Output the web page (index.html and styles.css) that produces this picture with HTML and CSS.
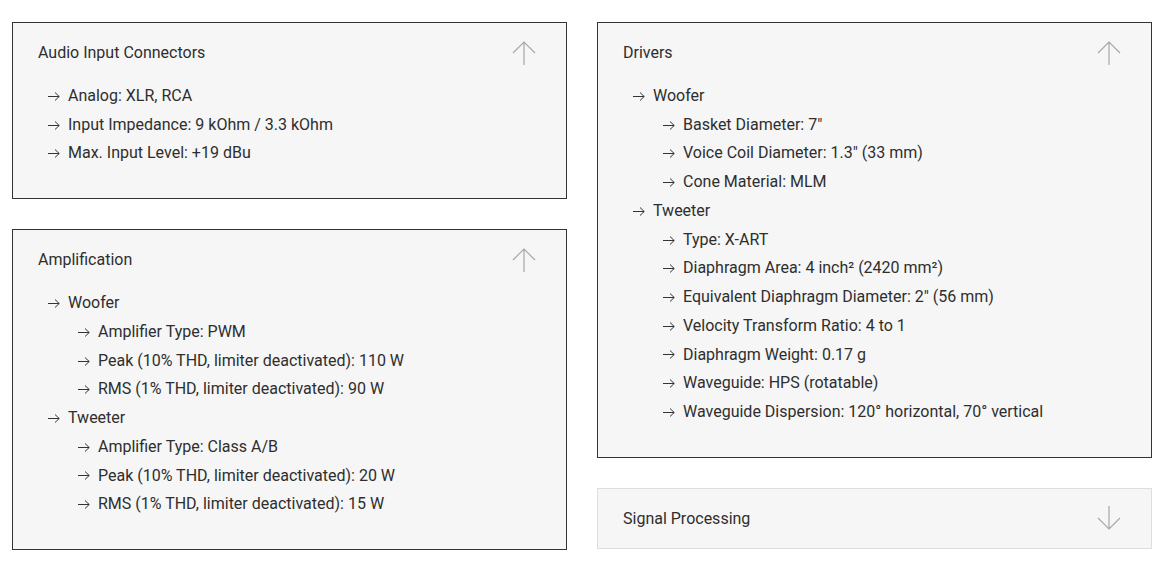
FILE: index.html
```html
<!DOCTYPE html>
<html lang="en">
<head>
  <meta charset="UTF-8" />
  <meta name="viewport" content="width=device-width, initial-scale=1" />
  <title>Technical Specifications</title>
  <link rel="stylesheet" href="styles.css">
</head>
<body>

  <div class="specs">
    <div class="column">

      <section class="spec-card open">
        <div class="spec-head">
          <span>Audio Input Connectors</span>
          <svg class="toggle" viewBox="0 0 24 24"><path d="M12 1v23M1 12L12 1l11 11"/></svg>
        </div>
        <ul class="spec-list">
          <li><i class="arr"></i>Analog: XLR, RCA</li>
          <li><i class="arr"></i>Input Impedance: 9 kOhm / 3.3 kOhm</li>
          <li><i class="arr"></i>Max. Input Level: +19 dBu</li>
        </ul>
      </section>

      <section class="spec-card open">
        <div class="spec-head">
          <span>Amplification</span>
          <svg class="toggle" viewBox="0 0 24 24"><path d="M12 1v23M1 12L12 1l11 11"/></svg>
        </div>
        <ul class="spec-list">
          <li><i class="arr"></i>Woofer</li>
          <li class="sub"><i class="arr"></i>Amplifier Type: PWM</li>
          <li class="sub"><i class="arr"></i>Peak (10% THD, limiter deactivated): 110 W</li>
          <li class="sub"><i class="arr"></i>RMS (1% THD, limiter deactivated): 90 W</li>
          <li><i class="arr"></i>Tweeter</li>
          <li class="sub"><i class="arr"></i>Amplifier Type: Class A/B</li>
          <li class="sub"><i class="arr"></i>Peak (10% THD, limiter deactivated): 20 W</li>
          <li class="sub"><i class="arr"></i>RMS (1% THD, limiter deactivated): 15 W</li>
        </ul>
      </section>

    </div>
    <div class="column">

      <section class="spec-card open">
        <div class="spec-head">
          <span>Drivers</span>
          <svg class="toggle" viewBox="0 0 24 24"><path d="M12 1v23M1 12L12 1l11 11"/></svg>
        </div>
        <ul class="spec-list">
          <li><i class="arr"></i>Woofer</li>
          <li class="sub"><i class="arr"></i>Basket Diameter: 7″</li>
          <li class="sub"><i class="arr"></i>Voice Coil Diameter: 1.3″ (33 mm)</li>
          <li class="sub"><i class="arr"></i>Cone Material: MLM</li>
          <li><i class="arr"></i>Tweeter</li>
          <li class="sub"><i class="arr"></i>Type: X-ART</li>
          <li class="sub"><i class="arr"></i>Diaphragm Area: 4 inch² (2420 mm²)</li>
          <li class="sub"><i class="arr"></i>Equivalent Diaphragm Diameter: 2″ (56 mm)</li>
          <li class="sub"><i class="arr"></i>Velocity Transform Ratio: 4 to 1</li>
          <li class="sub"><i class="arr"></i>Diaphragm Weight: 0.17 g</li>
          <li class="sub"><i class="arr"></i>Waveguide: HPS (rotatable)</li>
          <li class="sub"><i class="arr"></i>Waveguide Dispersion: 120° horizontal, 70° vertical</li>
        </ul>
      </section>

      <section class="spec-card">
        <div class="spec-head">
          <span>Signal Processing</span>
          <svg class="toggle" viewBox="0 0 24 24"><path d="M12 0v23M1 12l11 11 11-11"/></svg>
        </div>
      </section>

    </div>
  </div>

</body>
</html>
```

FILE: styles.css
```css
body {
  margin: 0;
  background: #ffffff;
  font-family: Roboto, "Liberation Sans", sans-serif;
  font-size: 16px;
  color: #2e2e2e;
}

.specs {
  display: grid;
  grid-template-columns: 555px 555px;
  column-gap: 30px;
  padding: 22px 0 0 12px;
  align-items: start;
}

.column {
  display: flex;
  flex-direction: column;
  gap: 30px;
}

.spec-card {
  background: #f6f6f6;
  border: 1px solid #dedede;
  padding: 0 25px;
}

.spec-card.open {
  border-color: #333333;
  padding-bottom: 30px;
}

.spec-head {
  height: 59px;
  display: flex;
  align-items: center;
  justify-content: space-between;
}

.toggle {
  width: 24px;
  height: 24px;
  margin-right: 5px;
  fill: none;
  stroke: #a8a8a8;
  stroke-width: 1.2;
}

.spec-list {
  list-style: none;
  margin: 0;
  padding: 0 0 0 10px;
}

.spec-list li {
  display: flex;
  align-items: center;
  line-height: 28.73px;
}

.spec-list li.sub {
  padding-left: 30px;
}

.arr {
  width: 12px;
  height: 9px;
  margin-right: 8px;
  background: no-repeat center / 12px 9px url("data:image/svg+xml,%3Csvg xmlns='http://www.w3.org/2000/svg' viewBox='0 0 12 9'%3E%3Cpath d='M0 4.5h11.2M7 0.5l4.2 4-4.2 4' fill='none' stroke='%23333' stroke-width='1'/%3E%3C/svg%3E");
}
```
